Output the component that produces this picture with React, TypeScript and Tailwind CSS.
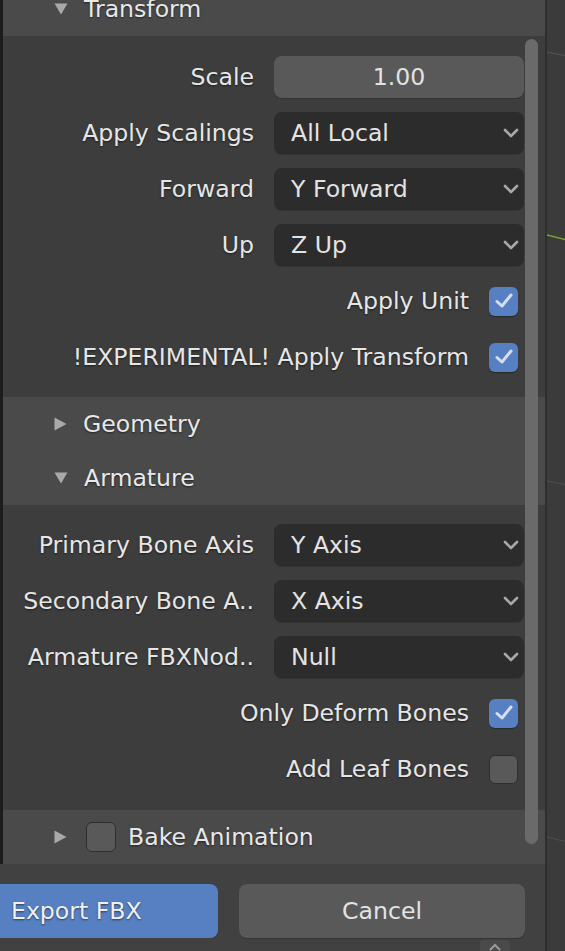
import type { ReactNode } from 'react'

const FONT = "font-['DejaVu_Sans',sans-serif]"
const SHADOW = '[text-shadow:0_1px_2px_rgba(0,0,0,0.55)]'

function Chevron() {
  return (
    <svg viewBox="0 0 16 10" width="16" height="10" className="shrink-0">
      <path d="M2 2 8 8 14 2" fill="none" stroke="#a8a8a8" strokeWidth="2.6" strokeLinecap="round" strokeLinejoin="round" />
    </svg>
  )
}

function Triangle({ open }: { open?: boolean }) {
  return open ? (
    <svg viewBox="0 0 14 12" width="14" height="12" className="shrink-0">
      <path d="M0.5 0.5 H13.5 L7 11.5 Z" fill="#a9a9a9" />
    </svg>
  ) : (
    <svg viewBox="0 0 13 14" width="13" height="14" className="shrink-0">
      <path d="M0.5 0.5 V13.5 L12.5 7 Z" fill="#a9a9a9" />
    </svg>
  )
}

function Check({ on }: { on?: boolean }) {
  return on ? (
    <span className="flex h-[29px] w-[29px] items-center justify-center rounded-[6px] bg-[#5680c2] shadow-[0_1px_1px_rgba(0,0,0,0.35)]">
      <svg viewBox="0 0 22 22" width="22" height="22">
        <path d="M4 11.5 9 16 18 5" fill="none" stroke="#d6def0" strokeWidth="3" strokeLinecap="round" strokeLinejoin="round" />
      </svg>
    </span>
  ) : (
    <span className="block h-[29px] w-[29px] rounded-[6px] border border-[#2f2f2f] bg-[#595959]" />
  )
}

function Row({ label, children }: { label: string; children: ReactNode }) {
  return (
    <div className="flex h-[42px] items-center">
      <div className={`w-[251px] whitespace-nowrap pt-[2px] text-right text-[#e6e6e6] ${SHADOW}`}>{label}</div>
      <div className="ml-[20px] w-[250px]">{children}</div>
    </div>
  )
}

function Dropdown({ value }: { value: string }) {
  return (
    <div className="flex h-[42px] items-center justify-between rounded-[8px] bg-[#2c2c2c] pl-[17px] pr-[5px] text-[#e3e3e3] shadow-[0_1px_0_#333]">
      <span className="pt-[2px]">{value}</span>
      <Chevron />
    </div>
  )
}

function CheckRow({ label, on }: { label: string; on?: boolean }) {
  return (
    <div className="flex h-[42px] items-center justify-end gap-[20px] pr-[6px]">
      <span className={`whitespace-nowrap pt-[2px] text-[#e6e6e6] ${SHADOW}`}>{label}</span>
      <Check on={on} />
    </div>
  )
}

function Header({ label, open, children }: { label: string; open?: boolean; children?: ReactNode }) {
  return (
    <div className="flex h-[54px] items-center bg-[#4a4a4a] pl-[51px]">
      <Triangle open={open} />
      {children}
      <span className={`ml-[16px] whitespace-nowrap pt-[2px] text-[#e8e8e8] ${SHADOW}`}>{label}</span>
    </div>
  )
}

export default function App() {
  return (
    <div className={`relative flex h-[951px] w-[565px] overflow-hidden bg-[#3a3a3a] text-[23.6px] leading-[1.25] ${FONT}`}>
      <div className="flex w-[545px] shrink-0 flex-col">
        {/* operator panel, scrolled so Transform's header is half gone */}
        <div className="flex h-[864px] shrink-0 overflow-hidden border-l-[3px] border-[#1c1c1c] bg-[#3d3d3d]">
          <div className="flex w-full flex-col">
            <div className="-mt-[18px]">
              <Header label="Transform" open />
            </div>
            <div className="flex w-[521px] flex-col gap-[14px] pb-[19px] pt-[20px]">
              <Row label="Scale">
                <div className="flex h-[42px] items-center justify-center rounded-[8px] bg-[#595959] pt-[2px] text-[#e3e3e3] shadow-[0_1px_0_#333]">1.00</div>
              </Row>
              <Row label="Apply Scalings"><Dropdown value="All Local" /></Row>
              <Row label="Forward"><Dropdown value="Y Forward" /></Row>
              <Row label="Up"><Dropdown value="Z Up" /></Row>
              <CheckRow label="Apply Unit" on />
              <CheckRow label="!EXPERIMENTAL! Apply Transform" on />
            </div>
            <Header label="Geometry" />
            <Header label="Armature" open />
            <div className="flex w-[521px] flex-col gap-[14px] pb-[20px] pt-[19px]">
              <Row label="Primary Bone Axis"><Dropdown value="Y Axis" /></Row>
              <Row label="Secondary Bone A.."><Dropdown value="X Axis" /></Row>
              <Row label="Armature FBXNod.."><Dropdown value="Null" /></Row>
              <CheckRow label="Only Deform Bones" on />
              <CheckRow label="Add Leaf Bones" />
            </div>
            <Header label="Bake Animation">
              <span className="ml-[19px] -mr-[4px] block h-[30px] w-[30px] rounded-[6px] border border-[#2f2f2f] bg-[#595959]" />
            </Header>
          </div>
        </div>
        {/* footer buttons */}
        <div className="flex flex-1 gap-[21px] bg-[#414141] pr-[20px] pt-[20px]">
          <div className={`flex h-[54px] w-[218px] items-center rounded-r-[8px] bg-[#5680c2] pl-[11px] pt-[2px] text-[#f0f0f0] ${SHADOW}`}>Export FBX</div>
          <div className="flex h-[54px] flex-1 items-center justify-center rounded-[8px] bg-[#595959] pt-[2px] text-[#e3e3e3] shadow-[0_1px_0_#343434]">Cancel</div>
        </div>
      </div>

      {/* strip of 3D viewport at the right */}
      <div className="relative flex-1 border-l-[2px] border-[#2e2e2e] bg-[#3b3b3b]">
        <svg className="absolute inset-0" width="20" height="951" viewBox="0 0 20 951">
          <path d="M0 52 L20 56" stroke="#555" strokeWidth="1" />
          <path d="M0 235 L20 240" stroke="#76a52a" strokeWidth="1.5" />
          <path d="M0 481 L20 485" stroke="#505050" strokeWidth="1" />
          <path d="M0 837 L20 842" stroke="#4f4f4f" strokeWidth="1" />
        </svg>
      </div>

      {/* scrollbar */}
      <div className="absolute left-[525px] top-[39px] h-[805px] w-[13px] rounded-full bg-[#6a6a6a]" />

      {/* region collapse tab */}
      <div className="absolute bottom-0 left-[480px] flex h-[11px] w-[30px] justify-center rounded-t-[4px] bg-[#4a4a4a] pt-[3px]">
        <svg viewBox="0 0 12 8" width="12" height="8">
          <path d="M1.5 6.5 6 2 10.5 6.5" fill="none" stroke="#9a9a9a" strokeWidth="2" strokeLinecap="round" />
        </svg>
      </div>
    </div>
  )
}
